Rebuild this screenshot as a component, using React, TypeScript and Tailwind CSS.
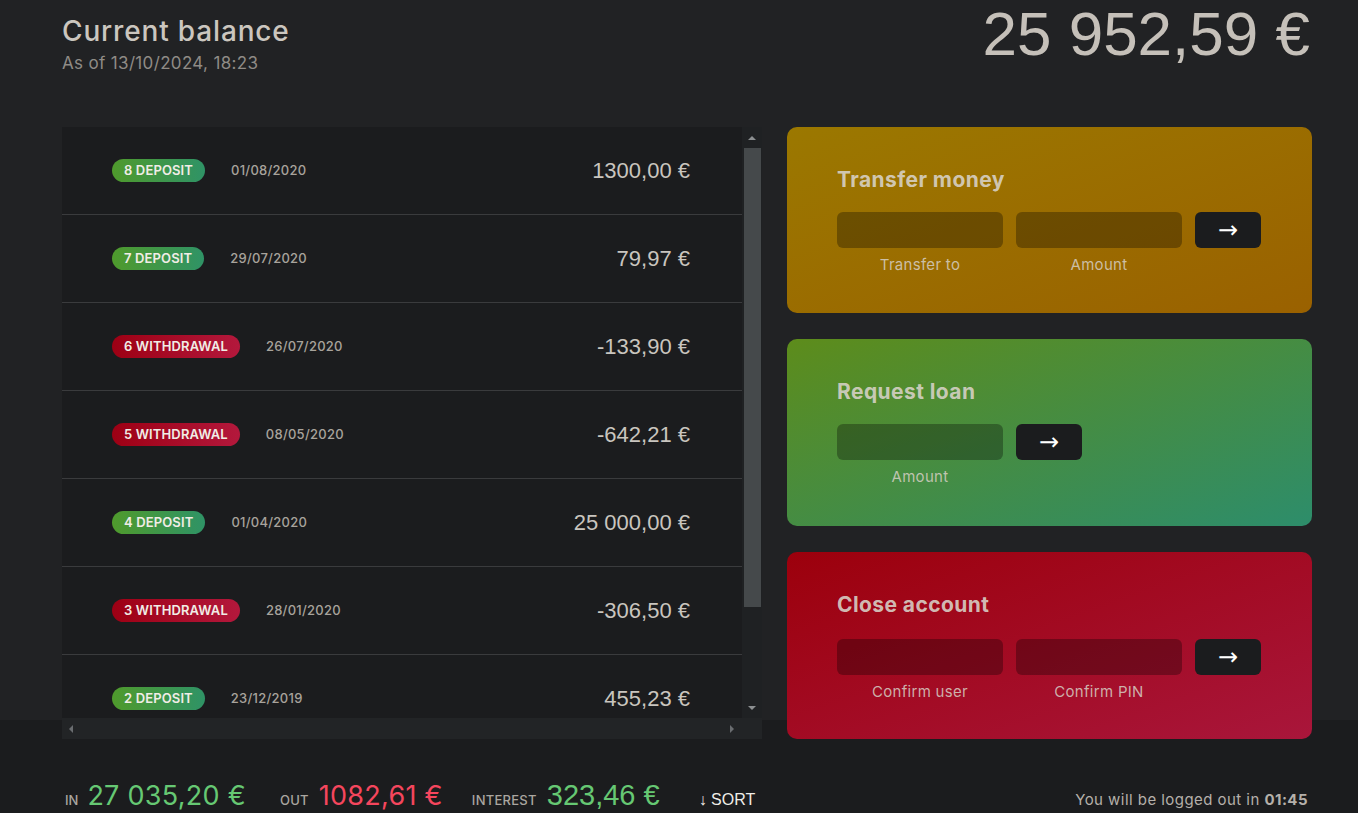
import React from "react";

type Movement = {
  n: number;
  type: "deposit" | "withdrawal";
  date: string;
  amount: string;
};

const movements: Movement[] = [
  { n: 8, type: "deposit", date: "01/08/2020", amount: "1300,00 €" },
  { n: 7, type: "deposit", date: "29/07/2020", amount: "79,97 €" },
  { n: 6, type: "withdrawal", date: "26/07/2020", amount: "-133,90 €" },
  { n: 5, type: "withdrawal", date: "08/05/2020", amount: "-642,21 €" },
  { n: 4, type: "deposit", date: "01/04/2020", amount: "25 000,00 €" },
  { n: 3, type: "withdrawal", date: "28/01/2020", amount: "-306,50 €" },
  { n: 2, type: "deposit", date: "23/12/2019", amount: "455,23 €" },
  { n: 1, type: "deposit", date: "18/11/2019", amount: "200,00 €" },
];

const ArrowBtn = () => (
  <button className="flex h-9 w-[66px] items-center justify-center rounded-md bg-[#1b1c1e] font-['DejaVu_Sans',sans-serif] text-[24px] leading-none text-white">
    →
  </button>
);

const Field = ({ label }: { label: string }) => (
  <div className="flex w-[166px] flex-col items-center gap-[7px]">
    <div className="h-9 w-full rounded-md bg-black/30" />
    <span className="text-[15px] leading-[20px] tracking-[0.02em] text-[#d6cfc4]/85">{label}</span>
  </div>
);

export default function App() {
  return (
    <div className="min-h-[813px] overflow-hidden bg-[linear-gradient(to_bottom,#212224_720px,#1b1c1e_720px)] font-['Inter',sans-serif] text-[#c9c5bf]">
      <div className="pl-[62px] pr-[46px]">
        {/* header */}
        <div className="flex items-start justify-between">
          <div className="pt-[13px]">
            <h1 className="text-[28px] leading-[36px] font-medium tracking-[0.03em] text-[#cbc6bf]">Current balance</h1>
            <p className="mt-[3px] text-[17px] leading-[22px] tracking-[0.02em] text-[#8f8b86]">As of 13/10/2024, 18:23</p>
          </div>
          <div className="mr-[2px] font-['Liberation_Sans',sans-serif] text-[62px] leading-[68px] text-[#c5c0b9]">
            25 952,59 €
          </div>
        </div>

        {/* main grid */}
        <div className="mt-[53px] flex gap-[25px]">
          {/* movements */}
          <div className="flex w-[700px] flex-col bg-[#1b1c1e]">
            <div className="flex h-[591px]">
              <div className="flex-1 overflow-hidden">
                {movements.map((m) => (
                  <div
                    key={m.n}
                    className="flex h-[88px] items-center border-b border-[#3a3b3d] pl-[50px] pr-[52px]"
                  >
                    <span
                      className={`rounded-full px-[12px] py-[2px] text-[13px] font-semibold uppercase tracking-[0.01em] text-[#f1ede6] ${
                        m.type === "deposit"
                          ? "bg-[linear-gradient(to_right,#4f9a2c,#2f9366)]"
                          : "bg-[linear-gradient(to_right,#9d0014,#b3183c)]"
                      }`}
                    >
                      {m.n} {m.type}
                    </span>
                    <span className="ml-[26px] text-[13px] font-medium tracking-[0.02em] text-[#a8a39c]">{m.date}</span>
                    <span className="ml-auto font-['Liberation_Sans',sans-serif] text-[22px] text-[#c9c5bf]">
                      {m.amount}
                    </span>
                  </div>
                ))}
              </div>
              {/* vertical scrollbar */}
              <div className="flex w-[20px] flex-col items-center bg-[#1f2123]">
                <div className="flex h-[21px] items-center justify-center">
                  <div className="h-0 w-0 border-x-[4px] border-b-[4px] border-x-transparent border-b-[#8c8f91]" />
                </div>
                <div className="h-[459px] w-[17px] bg-[#45494b]" />
                <div className="flex-1" />
                <div className="flex h-[21px] items-center justify-center">
                  <div className="h-0 w-0 border-x-[4px] border-t-[4px] border-x-transparent border-t-[#8c8f91]" />
                </div>
              </div>
            </div>
            {/* horizontal scrollbar */}
            <div className="flex h-[21px] items-center justify-between bg-[#222426] pl-[7px] pr-[28px]">
              <div className="h-0 w-0 border-y-[4px] border-r-[4px] border-y-transparent border-r-[#6a6d70]" />
              <div className="h-0 w-0 border-y-[4px] border-l-[4px] border-y-transparent border-l-[#6a6d70]" />
            </div>
          </div>

          {/* operations */}
          <div className="flex w-[525px] flex-col gap-[26px]">
            <div className="h-[186px] rounded-[10px] bg-[linear-gradient(to_bottom_right,#9b7800,#9a6100)] px-[50px] pt-[38px]">
              <h2 className="text-[21px] leading-[30px] font-bold tracking-[0.02em] text-[#d8d2c8]/90">Transfer money</h2>
              <div className="mt-[17px] flex gap-[13px]">
                <Field label="Transfer to" />
                <Field label="Amount" />
                <ArrowBtn />
              </div>
            </div>
            <div className="h-[187px] rounded-[10px] bg-[linear-gradient(to_bottom_right,#5d8c1b,#2d8d6b)] px-[50px] pt-[38px]">
              <h2 className="text-[21px] leading-[30px] font-bold tracking-[0.02em] text-[#d8d2c8]/90">Request loan</h2>
              <div className="mt-[17px] flex gap-[13px]">
                <Field label="Amount" />
                <ArrowBtn />
              </div>
            </div>
            <div className="h-[187px] rounded-[10px] bg-[linear-gradient(to_bottom_right,#9c000c,#a9163b)] px-[50px] pt-[38px]">
              <h2 className="text-[21px] leading-[30px] font-bold tracking-[0.02em] text-[#d8d2c8]/90">Close account</h2>
              <div className="mt-[19px] flex gap-[13px]">
                <Field label="Confirm user" />
                <Field label="Confirm PIN" />
                <ArrowBtn />
              </div>
            </div>
          </div>
        </div>

        {/* summary */}
        <div className="mt-[38px] flex items-baseline leading-[36px]">
          <span className="ml-[3px] text-[13px] font-medium uppercase text-[#aaa6a0]">In</span>
          <span className="ml-[9px] text-[27px] tracking-[0.01em] text-[#66c873]">27 035,20 €</span>
          <span className="ml-[34px] text-[13px] font-medium uppercase tracking-[0.02em] text-[#aaa6a0]">Out</span>
          <span className="ml-[10px] text-[27px] tracking-[0.01em] text-[#f5465d]">1082,61 €</span>
          <span className="ml-[29px] text-[13px] font-medium uppercase tracking-[0.02em] text-[#aaa6a0]">Interest</span>
          <span className="ml-[10px] font-['Liberation_Sans',sans-serif] text-[29px] text-[#66c873]">323,46 €</span>
          <button className="ml-[39px] font-['Liberation_Sans',sans-serif] text-[16px] text-[#f0ede8]">↓ SORT</button>
          <p className="ml-auto mr-[4px] text-[15px] tracking-[0.03em] text-[#b5b0aa]">
            You will be logged out in <span className="font-bold">01:45</span>
          </p>
        </div>
      </div>
    </div>
  );
}
